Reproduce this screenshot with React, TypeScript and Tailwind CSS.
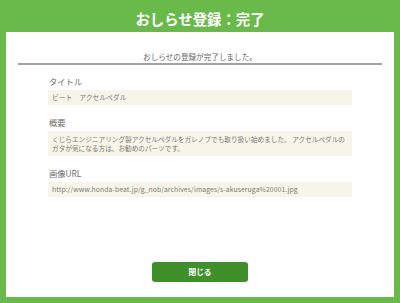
const font = { fontFamily: '"Noto Sans CJK JP", "Liberation Sans", sans-serif' };

function Field({ label, children }: { label: string; children: React.ReactNode }) {
  return (
    <div className="flex flex-col">
      <div className="pl-[1px] text-[8.3px] leading-[10px] text-[#6e6e6e]">{label}</div>
      <div className="mt-[4px] bg-[#f7f5e9] pl-[4px] pr-[1px] text-[6.8px] leading-[9px] text-[#7a7a7a]">
        {children}
      </div>
    </div>
  );
}

export default function App() {
  return (
    <div className="flex h-[303px] w-[400px] flex-col bg-[#6ab94b] px-[6px] pb-[6px]" style={font}>
      <div className="h-[32px] pt-[9px] text-center text-[14.4px] font-bold leading-[20px] text-white">
        おしらせ登録：完了
      </div>

      <div className="flex flex-1 flex-col bg-white pb-[15px]">
        <div className="mx-[12px] border-b-2 border-[#a3a3a3] pb-[1px] pt-[20px] text-center text-[7.6px] leading-[10px] text-[#666]">
          おしらせの登録が完了しました。
        </div>

        <div className="mt-[11px] flex flex-col gap-[12px] px-[42px]">
          <Field label="タイトル">
            <div className="py-[3px]">ビート　アクセルペダル</div>
          </Field>
          <Field label="概要">
            <div className="py-[3.5px] text-[6.65px]">
              くじらエンジニアリング製アクセルペダルをガレノブでも取り扱い始めました。 アクセルペダルのガタが気になる方は、お勧めのパーツです。
            </div>
          </Field>
          <Field label="画像URL">
            <div className="py-[3px] tracking-[0.1px]">http://www.honda-beat.jp/g_nob/archives/images/s-akuseruga%20001.jpg</div>
          </Field>
        </div>

        <div className="mt-auto flex justify-center">
          <button className="h-[20px] w-[96px] rounded-[3px] bg-[#3f8f2b] text-[7.7px] font-bold text-white">
            閉じる
          </button>
        </div>
      </div>
    </div>
  );
}
